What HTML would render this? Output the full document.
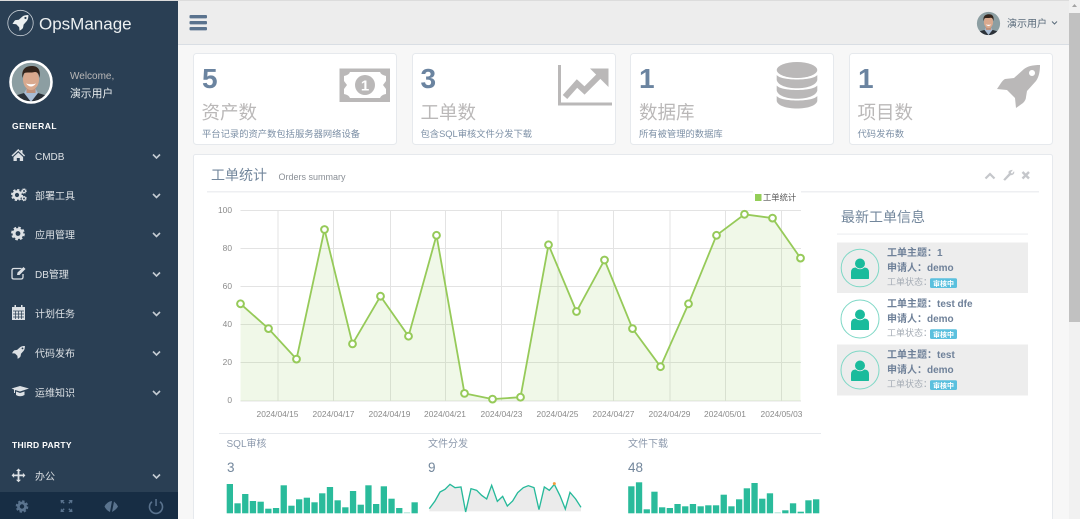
<!DOCTYPE html>
<html><head><meta charset="utf-8"><style>
html,body{margin:0;padding:0;width:1080px;height:519px;overflow:hidden;background:#F7F7F7}
svg{display:block}
text{font-family:"Liberation Sans","Noto Sans CJK SC",sans-serif}
.m{fill:#DCE0E4;font-size:10px}
.c{fill:none;stroke:#c5ccd3;stroke-width:1.6}
.n{fill:#6B84A0;font-size:28px;font-weight:bold}
.t{fill:#BAB8B8;font-size:18.5px}
.d{fill:#7d90a6;font-size:9.3px}
.ic{fill:#BAB8B8}
.ax{fill:#8a8a8a;font-size:8.4px}
.b{fill:#6F8199;font-size:10px;font-weight:bold}
.s{fill:#A5ACB5;font-size:9px}
.bd{fill:#fff;font-size:7px;font-weight:bold}
.l{fill:#8c99ac;font-size:10px}
.k{fill:#73879C;font-size:13.5px}
.bar rect{fill:#2ABB9B}
</style></head><body>
<svg xmlns="http://www.w3.org/2000/svg" width="1080" height="519" viewBox="0 0 1080 519">
<defs>
<clipPath id="av"><circle cx="0" cy="0" r="20"/></clipPath>
<g id="face"><g clip-path="url(#av)">
<rect x="-22" y="-22" width="44" height="44" fill="#8C9EA2"/>
<path d="M-20 20 L-17 14 L-7 11 L7 11 L17 14 L20 20Z" fill="#2b3138"/>
<path d="M-7 11 L0 20 L7 11 L4 6 L-4 6Z" fill="#a9bcd4"/>
<rect x="-4.500" y="3" width="9" height="8" fill="#c0917a"/>
<ellipse cx="0" cy="-2.500" rx="8" ry="10.500" fill="#D9A98E"/>
<path d="M-8.500 -4 C-10 -14 -4 -16 1 -16 C7 -16 10 -12 8.500 -4 C8 -7.500 7 -10 4 -10 C0 -9 -5 -10 -6.500 -9 C-7.500 -8 -8 -6 -8.500 -4Z" fill="#33241B"/>
<path d="M-5 1.500 Q0 7.500 5 1.500 Q0 3 -5 1.500Z" fill="#fff"/>
</g></g>
<g id="rk"><path fill-rule="evenodd" d="M43 0 C36 0 31 1 27 4 L17 13 L8 14 Q6 15 4 18 L0 24 L10 25 L18 33 L19 43 L26 38 Q29 35 29 32 L30 26 L39 16 C42 12 43 6 43 0Z M35 5 a3 3 0 1 0 .01 0Z"/></g>
<g id="gear"><circle r="3.400" fill="none" stroke-width="2.600" stroke="currentColor"/><circle r="5" fill="none" stroke-width="2" stroke="currentColor" stroke-dasharray="2.200 1.730"/></g>
<g id="usr"><circle cx="0" cy="-5" r="5"/><path d="M-9 10 V4 Q-9 -1 -4.500 -1 Q0 2.500 4.500 -1 Q9 -1 9 4 V10 Q9 10.500 8 10.500 H-8 Q-9 10.500 -9 10Z"/></g>
</defs>

<rect width="1080" height="519" fill="#F7F7F7"/>
<rect x="178" y="0" width="891" height="44" fill="#EDEDED"/>
<rect x="178" y="44" width="891" height="1" fill="#D9DEE4"/>
<rect x="0" y="0" width="1080" height="1" fill="#dcdcdc"/>
<rect x="189.500" y="15" width="17.500" height="3.400" rx="1" fill="#5A738E"/>
<rect x="189.500" y="21" width="17.500" height="3.400" rx="1" fill="#5A738E"/>
<rect x="189.500" y="27" width="17.500" height="3.400" rx="1" fill="#5A738E"/>
<g transform="translate(988.500 23.500) scale(.58)"><use href="#face"/></g>
<text x="1007" y="27" fill="#5A6B7B" style="font-size:10px">演示用户</text>
<path d="M1052 21.500 l2.500 2.500 l2.500 -2.500" fill="none" stroke="#5A6B7B" stroke-width="1"/>

<rect x="0" y="1" width="178" height="518" fill="#2A3F54"/>
<circle cx="20.500" cy="23" r="12.700" fill="none" stroke="#c9d0d7" stroke-width=".8"/>
<g transform="translate(12.500 15) scale(.37)" fill="#ECF0F1"><use href="#rk"/></g>
<text x="39" y="29.500" fill="#ECF0F1" style="font-size:17px">OpsManage</text>
<g transform="translate(31 82)"><use href="#face"/></g>
<circle cx="31" cy="82" r="20.500" fill="none" stroke="#fff" stroke-width="2.600"/>
<text x="70" y="79" fill="#BAB8B8" style="font-size:10px">Welcome,</text>
<text x="70" y="97" fill="#ECF0F1" style="font-size:10.800px">演示用户</text>
<text x="12" y="129" fill="#fff" style="font-size:8.500px;font-weight:bold;letter-spacing:.5px">GENERAL</text>

<text class="m" x="35" y="160">CMDB</text>
<text class="m" x="35" y="199.500">部署工具</text>
<text class="m" x="35" y="238.500">应用管理</text>
<text class="m" x="35" y="278">DB管理</text>
<text class="m" x="35" y="317.500">计划任务</text>
<text class="m" x="35" y="357">代码发布</text>
<text class="m" x="35" y="396.500">运维知识</text>
<text x="12" y="448" fill="#fff" style="font-size:8.500px;font-weight:bold;letter-spacing:.3px">THIRD PARTY</text>
<text class="m" x="35" y="480">办公</text>
<path class="c" d="M153 154.500 l3.500 3.500 l3.500 -3.500 M153 194 l3.500 3.500 l3.500 -3.500 M153 233 l3.500 3.500 l3.500 -3.500 M153 272.500 l3.500 3.500 l3.500 -3.500 M153 312 l3.500 3.500 l3.500 -3.500 M153 351.500 l3.500 3.500 l3.500 -3.500 M153 391 l3.500 3.500 l3.500 -3.500 M153 474.500 l3.500 3.500 l3.500 -3.500"/>
<g fill="#DCE0E4" color="#DCE0E4">
<path d="M18.300 149 L11.500 155.500 L12.500 156.500 L18.300 151 L24.100 156.500 L25.100 155.500 L22.500 153 V150 H20.500 V151.500Z M13.500 157 L18.300 152.500 L23.100 157 V161 H19.800 V158 H16.800 V161 H13.500Z"/>
<g transform="translate(17 195)"><use href="#gear"/></g>
<g transform="translate(24 191) scale(.45)"><use href="#gear"/></g>
<g transform="translate(24 198.500) scale(.45)"><use href="#gear"/></g>
<g transform="translate(18 233.500) scale(1.150)"><use href="#gear"/></g>
<path d="M21.500 268.500 H14 Q12 268.500 12 270.500 V277.500 Q12 279 14 279 H21 Q23 279 23 277 V274" fill="none" stroke="#DCE0E4" stroke-width="1.300"/>
<path d="M17 275 L17.500 272.500 L23.500 267 L25.500 269 L19.500 275Z"/>
<path d="M12 307 H25 V320 H12Z M14.500 305 h1.500 v3.500 h-1.500Z M21 305 h1.500 v3.500 h-1.500Z"/>
<path d="M13 311 h11 M13 314 h11 M13 317 h11 M15.500 311 v8 M18.500 311 v8 M21.500 311 v8" stroke="#2A3F54" stroke-width=".7"/>
<g transform="translate(12 346) scale(.3)"><use href="#rk"/></g>
<path d="M11.500 388.500 L20 386 L29 388.500 L20 391.500 L15 390 V393 H14 V389.500Z M16 391.500 L20 393 L24.500 391.500 V395 Q20 397.500 16 395Z"/>
<path d="M18.500 469 l2.500 2.500 h-1.600 v3.500 h3.500 v-1.600 l2.500 2.500 l-2.500 2.500 v-1.600 h-3.500 v3.500 h1.600 l-2.500 2.500 l-2.500 -2.500 h1.600 v-3.500 h-3.500 v1.600 l-2.500 -2.500 l2.500 -2.500 v1.600 h3.500 v-3.500 h-1.600Z" transform="translate(0 -.5)"/>
</g>
<rect x="0" y="492" width="178" height="27" fill="#172D44"/>
<g color="#5A738E" fill="#5A738E">
<g transform="translate(22 506.500) scale(1.050)"><use href="#gear"/></g>
<path d="M60.500 500 h4 l-1.300 1.300 l1.500 1.500 l-1 1 l-1.500 -1.500 l-1.200 1.300Z M72.500 500 h-4 l1.300 1.300 l-1.500 1.500 l1 1 l1.500 -1.500 l1.200 1.300Z M60.500 512 h4 l-1.300 -1.300 l1.500 -1.500 l-1 -1 l-1.500 1.500 l-1.200 -1.300Z M72.500 512 h-4 l1.300 -1.300 l-1.500 -1.500 l1 -1 l1.500 1.500 l1.200 -1.300Z"/>
<path d="M104.500 506.500 Q107 501.500 112 501 L110 512 Q106.500 510.500 104.500 506.500Z M114 501.500 Q116.500 503.500 118 506.500 Q116 510 112 512Z"/>
<path d="M152 501.800 A6.500 6.500 0 1 0 160 501.800" fill="none" stroke="#5A738E" stroke-width="1.600"/>
<rect x="155.300" y="499" width="1.500" height="7"/>
</g>

<g fill="#fff" stroke="#E6E9ED">
<rect x="193.500" y="53.500" width="203" height="91" rx="3"/>
<rect x="412.500" y="53.500" width="203" height="91" rx="3"/>
<rect x="630.500" y="53.500" width="203" height="91" rx="3"/>
<rect x="849.500" y="53.500" width="203" height="91" rx="3"/>
<rect x="193.500" y="154.500" width="859" height="370" rx="2"/>
</g>
<text class="n" x="202" y="88">5</text><text class="t" x="201.500" y="119">资产数</text><text class="d" x="202" y="137">平台记录的资产数包括服务器网络设备</text>
<text class="n" x="420.500" y="88">3</text><text class="t" x="420.500" y="119">工单数</text><text class="d" x="420.500" y="137">包含SQL审核文件分发下载</text>
<text class="n" x="639" y="88">1</text><text class="t" x="639" y="119">数据库</text><text class="d" x="639" y="137">所有被管理的数据库</text>
<text class="n" x="858" y="88">1</text><text class="t" x="857.500" y="119">项目数</text><text class="d" x="857.500" y="137">代码发布数</text>
<rect class="ic" x="339.500" y="68.500" width="50.500" height="33.500"/>
<path fill="#fff" d="M350 72 H380 Q381 75 386 76 V81 L383 85 L386 89 V94 Q381 95 380 98 H350 Q349 95 344 94 V89 L347 85 L344 81 V76 Q349 75 350 72Z"/>
<circle class="ic" cx="365" cy="85" r="10"/>
<text x="365" y="90.500" text-anchor="middle" fill="#fff" style="font-size:15px;font-weight:bold">1</text>
<path class="ic" d="M558 65 H561 V102.500 H612 V105.500 H558Z"/>
<path d="M565 97 L577 83.500 L584.500 90.500 L600 75" fill="none" stroke="#BAB8B8" stroke-width="6"/>
<path class="ic" d="M590 68.500 H608.500 V87Z"/>
<g class="ic">
<ellipse cx="797" cy="70" rx="20.300" ry="8"/>
<path d="M776.700 75 C781 81 813 81 817.300 75 V80 C815 91 779 91 776.700 80Z"/>
<path d="M776.700 85.500 C781 91.500 813 91.500 817.300 85.500 V90.500 C815 101.500 779 101.500 776.700 90.500Z"/>
<path d="M776.700 96 C781 102 813 102 817.300 96 V101 C815 111 779 111 776.700 101Z"/>
</g>
<g transform="translate(997 65)" class="ic"><use href="#rk"/></g>

<text x="211" y="180" fill="#73879C" style="font-size:14px">工单统计</text>
<text x="278.500" y="180" fill="#8a8f96" style="font-size:9px">Orders summary</text>
<rect x="207" y="191" width="832" height="1.500" fill="#EEEFF2"/>
<path d="M985.500 178.500 L990 174 L994.500 178.500" fill="none" stroke="#C5C7CB" stroke-width="2.200"/>
<path d="M1003.500 179.500 L1009 173.500 Q1008 171 1010.500 170.500 L1012.500 170 L1010.500 172.500 L1012 174 L1014 171.500 Q1014.500 175 1010.500 175 L1005 180.500Z" fill="#C5C7CB" stroke="#C5C7CB" stroke-width=".5"/>
<path d="M1022.500 172 L1029 178.500 M1029 172 L1022.500 178.500" stroke="#C5C7CB" stroke-width="2.400"/>

<g stroke="#E3E3E3" stroke-width="1">
<path d="M240.500 210.500 H801 M240.500 248.500 H801 M240.500 286.500 H801 M240.500 324.500 H801 M240.500 362.500 H801 M240.500 401 H801" fill="none"/>
<path d="M278 210.500 V401 M333.500 210.500 V401 M390.500 210.500 V401 M445.500 210.500 V401 M501.500 210.500 V401 M558 210.500 V401 M613.500 210.500 V401 M670 210.500 V401 M725.500 210.500 V401 M781.500 210.500 V401"/>
</g>
<rect x="753" y="189" width="48" height="14" fill="#fff"/>
<rect x="755" y="194" width="6.500" height="7" fill="#94CE58"/>
<text x="763" y="200.500" fill="#555" style="font-size:8.300px">工单统计</text>
<g class="ax" text-anchor="end">
<text x="232" y="213">100</text><text x="232" y="251">80</text><text x="232" y="289">60</text><text x="232" y="327">40</text><text x="232" y="365">20</text><text x="232" y="403">0</text>
</g>
<g class="ax" text-anchor="middle">
<text x="277.500" y="417">2024/04/15</text><text x="333.500" y="417">2024/04/17</text><text x="389.500" y="417">2024/04/19</text><text x="445" y="417">2024/04/21</text><text x="501.500" y="417">2024/04/23</text><text x="557.500" y="417">2024/04/25</text><text x="613.500" y="417">2024/04/27</text><text x="669.500" y="417">2024/04/29</text><text x="725" y="417">2024/05/01</text><text x="781.500" y="417">2024/05/03</text>
</g>
<path d="M240.500 303.800 L268.500 328.600 L296.500 359.100 L324.500 229.500 L352.500 343.900 L380.500 296.200 L408.500 336.200 L436.500 235.300 L464.500 393.400 L492.500 399.100 L520.500 397.200 L548.500 244.800 L576.500 311.500 L604.500 260 L632.500 328.600 L660.500 366.700 L688.500 303.800 L716.500 235.300 L744.500 214.300 L772.500 218.100 L800.500 258.100 V401 H240.500Z" fill="#96CA59" fill-opacity=".14"/>
<polyline points="240.500,303.800 268.500,328.600 296.500,359.100 324.500,229.500 352.500,343.900 380.500,296.200 408.500,336.200 436.500,235.300 464.500,393.400 492.500,399.100 520.500,397.200 548.500,244.800 576.500,311.500 604.500,260 632.500,328.600 660.500,366.700 688.500,303.800 716.500,235.300 744.500,214.300 772.500,218.100 800.500,258.100" fill="none" stroke="#96CA59" stroke-width="1.800"/>
<g fill="#fff" stroke="#96CA59" stroke-width="2">
<circle cx="240.500" cy="303.800" r="3.400"/><circle cx="268.500" cy="328.600" r="3.400"/><circle cx="296.500" cy="359.100" r="3.400"/><circle cx="324.500" cy="229.500" r="3.400"/><circle cx="352.500" cy="343.900" r="3.400"/><circle cx="380.500" cy="296.200" r="3.400"/><circle cx="408.500" cy="336.200" r="3.400"/><circle cx="436.500" cy="235.300" r="3.400"/><circle cx="464.500" cy="393.400" r="3.400"/><circle cx="492.500" cy="399.100" r="3.400"/><circle cx="520.500" cy="397.200" r="3.400"/><circle cx="548.500" cy="244.800" r="3.400"/><circle cx="576.500" cy="311.500" r="3.400"/><circle cx="604.500" cy="260" r="3.400"/><circle cx="632.500" cy="328.600" r="3.400"/><circle cx="660.500" cy="366.700" r="3.400"/><circle cx="688.500" cy="303.800" r="3.400"/><circle cx="716.500" cy="235.300" r="3.400"/><circle cx="744.500" cy="214.300" r="3.400"/><circle cx="772.500" cy="218.100" r="3.400"/><circle cx="800.500" cy="258.100" r="3.400"/>
</g>

<text x="841" y="222" fill="#73879C" style="font-size:14px">最新工单信息</text>
<rect x="837" y="233.500" width="191" height="1.200" fill="#EEEFF2"/>
<rect x="837" y="242.500" width="191" height="50.500" fill="#EDEDED"/>
<rect x="837" y="344.500" width="191" height="51" fill="#EDEDED"/>
<g fill="none" stroke="#7FD8C6" stroke-width="1">
<circle cx="860" cy="268" r="18.800"/><circle cx="860" cy="319" r="19"/><circle cx="860" cy="370" r="19"/>
</g>
<g fill="#1ABB9C">
<g transform="translate(860 268.500)"><use href="#usr"/></g>
<g transform="translate(860 319.500)"><use href="#usr"/></g>
<g transform="translate(860 370.500)"><use href="#usr"/></g>
</g>
<text class="b" x="887" y="256">工单主题：1</text>
<text class="b" x="887" y="271">申请人：demo</text>
<text class="s" x="887" y="285">工单状态：</text>
<text class="b" x="887" y="307">工单主题：test dfe</text>
<text class="b" x="887" y="322">申请人：demo</text>
<text class="s" x="887" y="336">工单状态：</text>
<text class="b" x="887" y="358">工单主题：test</text>
<text class="b" x="887" y="373">申请人：demo</text>
<text class="s" x="887" y="387">工单状态：</text>
<g fill="#5BC0DE">
<rect x="930" y="278.300" width="27" height="9.700" rx="1.500"/><rect x="930" y="329.300" width="27" height="9.700" rx="1.500"/><rect x="930" y="380.300" width="27" height="9.700" rx="1.500"/>
</g>
<g class="bd" text-anchor="middle">
<text x="943.500" y="286">审核中</text><text x="943.500" y="337">审核中</text><text x="943.500" y="388">审核中</text>
</g>

<rect x="219" y="433" width="602" height="1" fill="#E6E9ED"/>
<text class="l" x="226.500" y="447">SQL审核</text>
<text class="l" x="428" y="447">文件分发</text>
<text class="l" x="628" y="447">文件下载</text>
<text class="k" x="227" y="472">3</text>
<text class="k" x="428" y="472">9</text>
<text class="k" x="628" y="472">48</text>
<g class="bar">
<rect x="226.700" y="484" width="6.300" height="29.300"/><rect x="234.400" y="503.300" width="6.300" height="10"/><rect x="242.100" y="494" width="6.300" height="19.300"/><rect x="249.800" y="501" width="6.300" height="12.300"/><rect x="257.500" y="501.700" width="6.300" height="11.600"/><rect x="265.200" y="508.700" width="6.300" height="4.600"/><rect x="272.900" y="508" width="6.300" height="5.300"/><rect x="280.600" y="485.300" width="6.300" height="28"/><rect x="288.300" y="505.700" width="6.300" height="7.600"/><rect x="296" y="499.300" width="6.300" height="14"/><rect x="303.700" y="497.700" width="6.300" height="15.600"/><rect x="311.400" y="502.300" width="6.300" height="11"/><rect x="319.100" y="493.300" width="6.300" height="20"/><rect x="326.800" y="487" width="6.300" height="26.300"/><rect x="334.500" y="500.300" width="6.300" height="13"/><rect x="342.200" y="507.300" width="6.300" height="6"/><rect x="349.900" y="491" width="6.300" height="22.300"/><rect x="357.600" y="504.700" width="6.300" height="8.600"/><rect x="365.300" y="485.300" width="6.300" height="28"/><rect x="373" y="504" width="6.300" height="9.300"/><rect x="380.700" y="486.300" width="6.300" height="27"/><rect x="388.400" y="498.700" width="6.300" height="14.600"/><rect x="396.100" y="508" width="6.300" height="5.300"/><rect x="403.800" y="512.300" width="6.300" height="1" opacity=".4"/><rect x="411.500" y="502.300" width="6.300" height="11"/>
<rect x="628.200" y="486.300" width="6.300" height="27"/><rect x="635.900" y="482.300" width="6.300" height="31"/><rect x="643.600" y="509.300" width="6.300" height="4"/><rect x="651.300" y="491.700" width="6.300" height="21.600"/><rect x="659" y="507.300" width="6.300" height="6"/><rect x="666.700" y="508" width="6.300" height="5.300"/><rect x="674.400" y="504" width="6.300" height="9.300"/><rect x="682.100" y="506.300" width="6.300" height="7"/><rect x="689.800" y="504" width="6.300" height="9.300"/><rect x="697.500" y="506.300" width="6.300" height="7"/><rect x="705.200" y="505.300" width="6.300" height="8"/><rect x="712.900" y="505.300" width="6.300" height="8"/><rect x="720.600" y="494.700" width="6.300" height="18.600"/><rect x="728.300" y="506.300" width="6.300" height="7"/><rect x="736" y="499.300" width="6.300" height="14"/><rect x="743.700" y="488.300" width="6.300" height="25"/><rect x="751.400" y="483" width="6.300" height="30.300"/><rect x="759.100" y="498.700" width="6.300" height="14.600"/><rect x="766.800" y="493.300" width="6.300" height="20"/><rect x="774.500" y="512.300" width="6.300" height="1" opacity=".4"/><rect x="782.200" y="510.300" width="6.300" height="3"/><rect x="789.900" y="503.300" width="6.300" height="10"/><rect x="797.600" y="511.700" width="6.300" height="1.600"/><rect x="805.300" y="500.300" width="6.300" height="13"/><rect x="813" y="499.300" width="6.300" height="14"/>
</g>
<g transform="translate(420 425) scale(.3333)">
<path d="M28 251 L45 228 L60 201 L75 193 L90 178 L105 188 L123 186 L137 261 L153 191 L170 196 L185 211 L200 222 L215 181 L232 229 L248 214 L262 243 L278 228 L293 203 L310 188 L325 182 L342 188 L357 254 L373 186 L388 196 L403 178 L420 212 L436 252 L450 202 L467 222 L483 247 V259 H28Z" fill="#EBEBEB"/>
<polyline points="28,251 45,228 60,201 75,193 90,178 105,188 123,186 137,261 153,191 170,196 185,211 200,222 215,181 232,229 248,214 262,243 278,228 293,203 310,188 325,182 342,188 357,254 373,186 388,196 403,178 420,212 436,252 450,202 467,222 483,247" fill="none" stroke="#26B99A" stroke-width="4"/>
<circle cx="403" cy="176" r="4.500" fill="#F39C3C"/>
</g>

<rect x="1069" y="0" width="11" height="519" fill="#F1F1F1"/>
<path d="M1072 7 L1074.500 4 L1077 7Z" fill="#a3a3a3"/>
<rect x="1069" y="13" width="11" height="309" fill="#C1C1C1"/>
</svg>
</body></html>
